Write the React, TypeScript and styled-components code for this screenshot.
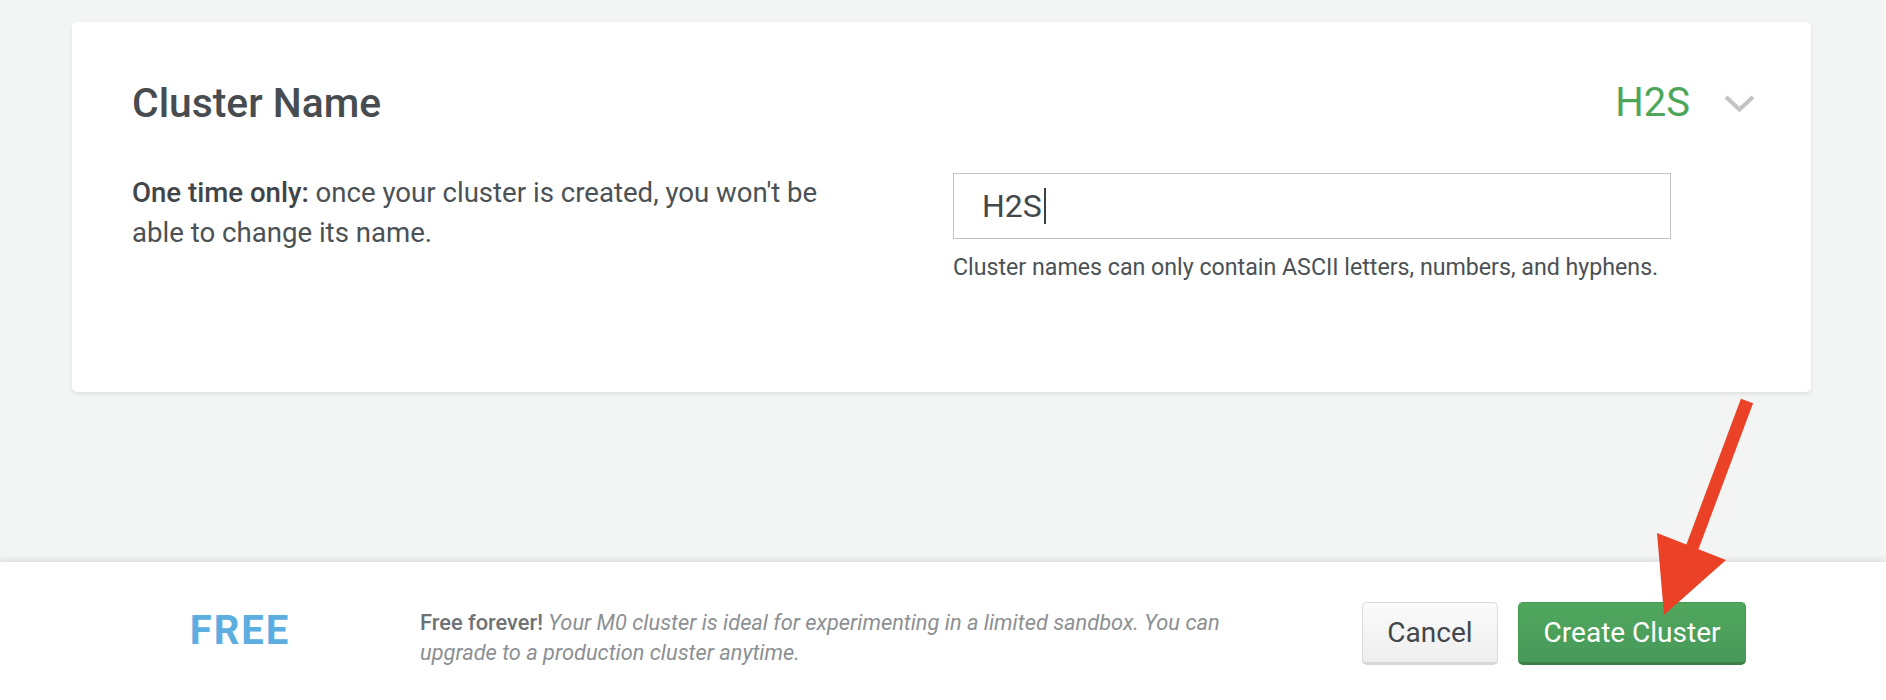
import React from "react";
import styled, { createGlobalStyle } from "styled-components";

const GlobalStyle = createGlobalStyle`
  html, body {
    margin: 0;
    padding: 0;
    background: #f3f4f4;
    font-family: Roboto, "Liberation Sans", Arial, sans-serif;
  }
  * { box-sizing: border-box; }
`;

const Page = styled.div`
  position: relative;
  display: flex;
  flex-direction: column;
  height: 700px;
  width: 1886px;
  overflow: hidden;
`;

const Main = styled.main`
  flex: 1;
  padding: 22px 75px 0 72px;
  background: #f3f4f4;
`;

const Card = styled.section`
  height: 370px;
  background: #ffffff;
  border-radius: 5px;
  box-shadow: 0 2px 4px rgba(0, 0, 0, 0.09);
  padding: 57px 56px 0 60px;
`;

const HeaderRow = styled.div`
  display: flex;
  align-items: center;
  justify-content: space-between;
  height: 48px;
`;

const Title = styled.h2`
  margin: 0;
  font-size: 40.8px;
  line-height: 48px;
  font-weight: 500;
  color: #464c4f;
`;

const Summary = styled.div`
  display: flex;
  align-items: center;
  gap: 34px;
`;

const SummaryValue = styled.span`
  font-size: 40px;
  line-height: 48px;
  color: #4ea65b;
`;

const Body = styled.div`
  display: flex;
  margin-top: 46px;
`;

const Description = styled.p`
  margin: 0;
  width: 821px;
  padding-right: 100px;
  font-size: 27.6px;
  line-height: 40px;
  color: #4b5155;

  strong {
    font-weight: 500;
    color: #3f4548;
  }
`;

const Field = styled.div`
  width: 718px;
  display: flex;
  flex-direction: column;
`;

const InputBox = styled.div`
  height: 66px;
  border: 1px solid #c3c3c3;
  display: flex;
  align-items: center;
  padding-left: 28px;
  font-size: 32px;
  color: #42484b;
`;

const Caret = styled.span`
  display: inline-block;
  width: 2px;
  height: 36px;
  margin-left: 2px;
  background: #3a3f42;
`;

const Help = styled.p`
  margin: 12px 0 0;
  font-size: 23.2px;
  line-height: 32px;
  color: #4b5155;
`;

const Footer = styled.footer`
  height: 138px;
  background: #ffffff;
  box-shadow: 0 -2px 6px rgba(0, 0, 0, 0.1);
  display: flex;
  align-items: center;
  padding: 5px 140px 0 72px;
  position: relative;
`;

const Tier = styled.div`
  width: 336px;
  margin-bottom: 7px;
  text-align: center;
  font-size: 40px;
  font-weight: 700;
  letter-spacing: 2px;
  color: #5caee1;
`;

const Note = styled.p`
  margin: 8px 0 0 12px;
  width: 830px;
  font-size: 21.8px;
  line-height: 30px;
  color: #8c9093;

  strong {
    font-weight: 500;
    color: #6e7275;
  }
  em {
    font-style: italic;
  }
`;

const Actions = styled.div`
  margin-left: auto;
  display: flex;
  gap: 20px;
`;

const Button = styled.button<{ $primary?: boolean }>`
  height: 63px;
  padding: 0 24.5px;
  border-radius: 5px;
  font-family: Roboto, "Liberation Sans", Arial, sans-serif;
  font-size: 28px;
  cursor: pointer;
  color: ${(p) => (p.$primary ? "#ffffff" : "#42474b")};
  background: ${(p) =>
    p.$primary
      ? "linear-gradient(#50a75d, #47995a)"
      : "linear-gradient(#fbfbfb, #eeeeee)"};
  border: 1px solid ${(p) => (p.$primary ? "#45984f" : "#dadada")};
  border-bottom: 3px solid ${(p) => (p.$primary ? "#3b7f44" : "#d6d6d6")};
`;

const Annotation = styled.svg`
  position: absolute;
  left: 0;
  top: 0;
  pointer-events: none;
`;

const Chevron = () => (
  <svg width="31" height="17" viewBox="0 0 31 17">
    <polyline
      points="2,2 15.5,14.5 29,2"
      fill="none"
      stroke="#c3c3c3"
      strokeWidth="4"
      strokeLinecap="butt"
      strokeLinejoin="miter"
    />
  </svg>
);

export default function App() {
  return (
    <>
      <GlobalStyle />
      <Page>
        <Main>
          <Card>
            <HeaderRow>
              <Title>Cluster Name</Title>
              <Summary>
                <SummaryValue>H2S</SummaryValue>
                <Chevron />
              </Summary>
            </HeaderRow>
            <Body>
              <Description>
                <strong>One time only:</strong> once your cluster is created,
                you won't be able to change its name.
              </Description>
              <Field>
                <InputBox>
                  H2S
                  <Caret />
                </InputBox>
                <Help>
                  Cluster names can only contain ASCII letters, numbers, and
                  hyphens.
                </Help>
              </Field>
            </Body>
          </Card>
        </Main>
        <Footer>
          <Tier>FREE</Tier>
          <Note>
            <strong>Free forever!</strong>{" "}
            <em>
              Your M0 cluster is ideal for experimenting in a limited sandbox.
              You can upgrade to a production cluster anytime.
            </em>
          </Note>
          <Actions>
            <Button>Cancel</Button>
            <Button $primary>Create Cluster</Button>
          </Actions>
        </Footer>
        <Annotation width="1886" height="700" viewBox="0 0 1886 700">
          <line
            x1="1747"
            y1="401"
            x2="1692"
            y2="548"
            stroke="#ea4127"
            strokeWidth="13"
          />
          <polygon points="1657,533 1726,560 1664,615" fill="#ea4127" />
        </Annotation>
      </Page>
    </>
  );
}
